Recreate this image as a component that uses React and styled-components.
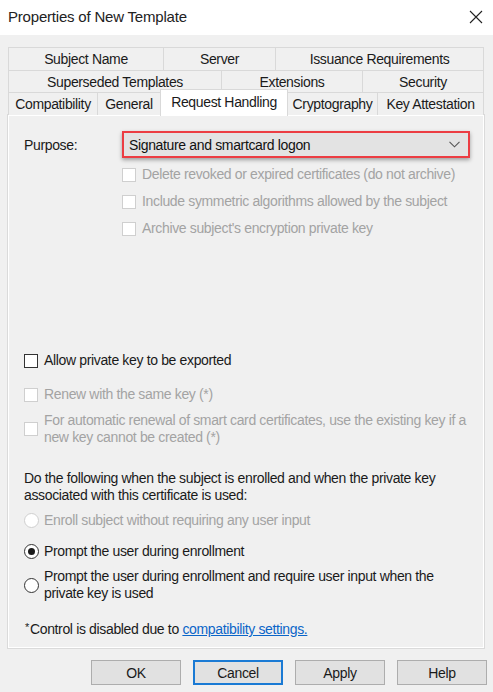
import React from 'react'
import styled, { createGlobalStyle } from 'styled-components'

const GlobalStyle = createGlobalStyle`
    html, body {
        margin: 0;
        padding: 0;
        background: #f0f0f0;
    }
    body {
        font-family: "Liberation Sans", Arial, sans-serif;
        font-size: 14px;
        letter-spacing: -0.35px;
        color: #1a1a1a;
    }
`;

const Window = styled.div`
    width: 493px;
    height: 692px;
    display: flex;
    flex-direction: column;
    background: #f0f0f0;
    overflow: hidden;
`;

const TitleBar = styled.div`
    height: 35px;
    flex: none;
    background: #ffffff;
    display: flex;
    align-items: center;
    justify-content: space-between;
    padding: 0 10px 2px 8px;
    box-sizing: border-box;
    font-size: 15px;
    letter-spacing: -0.2px;
    color: #222;
`;

const CloseBtn = styled.div`
    width: 14px;
    height: 14px;
    display: flex;
    svg { display: block; }
`;

const Body = styled.div`
    flex: 1;
    display: flex;
    flex-direction: column;
    padding: 12px 9px 0 8px;
`;

const Tabs = styled.div`
    display: flex;
    flex-direction: column;
`;

const TabRow = styled.div`
    display: flex;
    height: ${p => p.h}px;
    align-items: flex-end;
`;

const Tab = styled.div`
    width: ${p => p.w}px;
    height: ${p => p.active ? p.h + 4 : p.h}px;
    box-sizing: border-box;
    display: flex;
    align-items: center;
    justify-content: center;
    border: 1px solid #d9d9d9;
    border-bottom: none;
    margin-left: -1px;
    background: ${p => p.active ? '#ffffff' : '#f0f0f0'};
    padding-bottom: ${p => p.active ? 3 : 0}px;
    position: relative;
    z-index: ${p => p.active ? 2 : 1};
    margin-bottom: ${p => p.active ? -1 : 0}px;
    color: #1a1a1a;
    white-space: nowrap;
    &:first-child { margin-left: 0; }
`;

const Panel = styled.div`
    height: 533px;
    box-sizing: border-box;
    border: 1px solid #ffffff;
    outline: 1px solid #dadada;
    background: #f0f0f0;
    padding: 15px 13px 0 15px;
    display: flex;
    flex-direction: column;
`;

const PurposeRow = styled.div`
    display: flex;
    align-items: center;
    height: 27px;
`;

const Label = styled.div`
    width: 98px;
    flex: none;
`;

const Combo = styled.div`
    flex: 1;
    height: 27px;
    box-sizing: border-box;
    border: 2px solid #ec3d43;
    background: #e3e3e3;
    box-shadow: 0 2px 4px rgba(0, 0, 0, 0.35);
    display: flex;
    align-items: center;
    justify-content: space-between;
    padding: 0 8px 0 5px;
    color: #111;
`;

const Chevron = styled.svg`
    width: 11px;
    height: 7px;
    display: block;
`;

const Option = styled.div`
    display: flex;
    align-items: center;
    margin-top: ${p => p.mt}px;
    margin-left: ${p => p.indent || 0}px;
    color: ${p => p.disabled ? '#a3a3a3' : '#1a1a1a'};
    line-height: 17px;
`;

const Box = styled.div`
    width: 14px;
    height: 14px;
    flex: none;
    box-sizing: border-box;
    border: 1px solid ${p => p.disabled ? '#cfcfcf' : '#333333'};
    background: #ffffff;
    margin-right: 6px;
`;

const Radio = styled.div`
    width: 15px;
    height: 15px;
    flex: none;
    box-sizing: border-box;
    border-radius: 50%;
    border: 1px solid ${p => p.disabled ? '#cfcfcf' : '#333333'};
    background: #ffffff;
    margin-right: 5px;
    display: flex;
    align-items: center;
    justify-content: center;
    &::after {
        content: '';
        display: ${p => p.checked ? 'block' : 'none'};
        width: 7px;
        height: 7px;
        border-radius: 50%;
        background: #1a1a1a;
    }
`;

const Paragraph = styled.div`
    margin-top: ${p => p.mt}px;
    line-height: 17px;
`;

const Footnote = styled.div`
    margin-top: auto;
    margin-bottom: 10px;
    margin-left: 1px;
    sup {
        font-size: 11px;
        vertical-align: 3px;
        margin-right: 1px;
    }
`;

const Link = styled.a`
    color: #0b65c8;
    text-decoration: underline;
`;

const Buttons = styled.div`
    display: flex;
    justify-content: flex-end;
    gap: 12px;
    margin-top: 12px;
    margin-right: -3px;
`;

const Button = styled.div`
    width: 90px;
    height: 25px;
    box-sizing: border-box;
    border: ${p => p.focused ? '2px solid #1a7ad4' : '1px solid #adadad'};
    background: #e1e1e1;
    display: flex;
    align-items: center;
    justify-content: center;
    color: #1a1a1a;
`;

const tabRows = [
    { h: 23, tabs: [['Subject Name', 156], ['Server', 113], ['Issuance Requirements', 209]] },
    { h: 22, tabs: [['Superseded Templates', 214], ['Extensions', 142], ['Security', 122]] },
    { h: 23, tabs: [['Compatibility', 90], ['General', 64], ['Request Handling', 128], ['Cryptography', 91], ['Key Attestation', 107]] },
]

function App() {
    return (
        <Window>
            <GlobalStyle />
            <TitleBar>
                <span>Properties of New Template</span>
                <CloseBtn>
                    <svg width="14" height="14" viewBox="0 0 14 14">
                        <path d="M1 1 L13 13 M13 1 L1 13" stroke="#222" strokeWidth="1.1" />
                    </svg>
                </CloseBtn>
            </TitleBar>
            <Body>
                <Tabs>
                    {tabRows.map((row, i) => (
                        <TabRow key={i} h={row.h}>
                            {row.tabs.map(([name, w]) => (
                                <Tab key={name} w={w} h={row.h} active={name === 'Request Handling'}>
                                    {name}
                                </Tab>
                            ))}
                        </TabRow>
                    ))}
                </Tabs>
                <Panel>
                    <PurposeRow>
                        <Label>Purpose:</Label>
                        <Combo>
                            <span>Signature and smartcard logon</span>
                            <Chevron viewBox="0 0 11 7">
                                <path d="M0.5 0.8 L5.5 5.8 L10.5 0.8" fill="none" stroke="#555" strokeWidth="1.1" />
                            </Chevron>
                        </Combo>
                    </PurposeRow>
                    <Option disabled indent={98} mt={8}><Box disabled />Delete revoked or expired certificates (do not archive)</Option>
                    <Option disabled indent={98} mt={10}><Box disabled />Include symmetric algorithms allowed by the subject</Option>
                    <Option disabled indent={98} mt={10}><Box disabled />Archive subject's encryption private key</Option>

                    <Option mt={115}><Box />Allow private key to be exported</Option>
                    <Option disabled mt={17}><Box disabled />Renew with the same key (*)</Option>
                    <Option disabled mt={9}><Box disabled />For automatic renewal of smart card certificates, use the existing key if a<br />new key cannot be created (*)</Option>

                    <Paragraph mt={24}>Do the following when the subject is enrolled and when the private key<br />associated with this certificate is used:</Paragraph>
                    <Option disabled mt={8}><Radio disabled />Enroll subject without requiring any user input</Option>
                    <Option mt={14}><Radio checked />Prompt the user during enrollment</Option>
                    <Option mt={8}><Radio />Prompt the user during enrollment and require user input when the<br />private key is used</Option>

                    <Footnote><sup>*</sup>Control is disabled due to <Link>compatibility settings.</Link></Footnote>
                </Panel>
                <Buttons>
                    <Button>OK</Button>
                    <Button focused>Cancel</Button>
                    <Button>Apply</Button>
                    <Button>Help</Button>
                </Buttons>
            </Body>
        </Window>
    )
}

export default App
